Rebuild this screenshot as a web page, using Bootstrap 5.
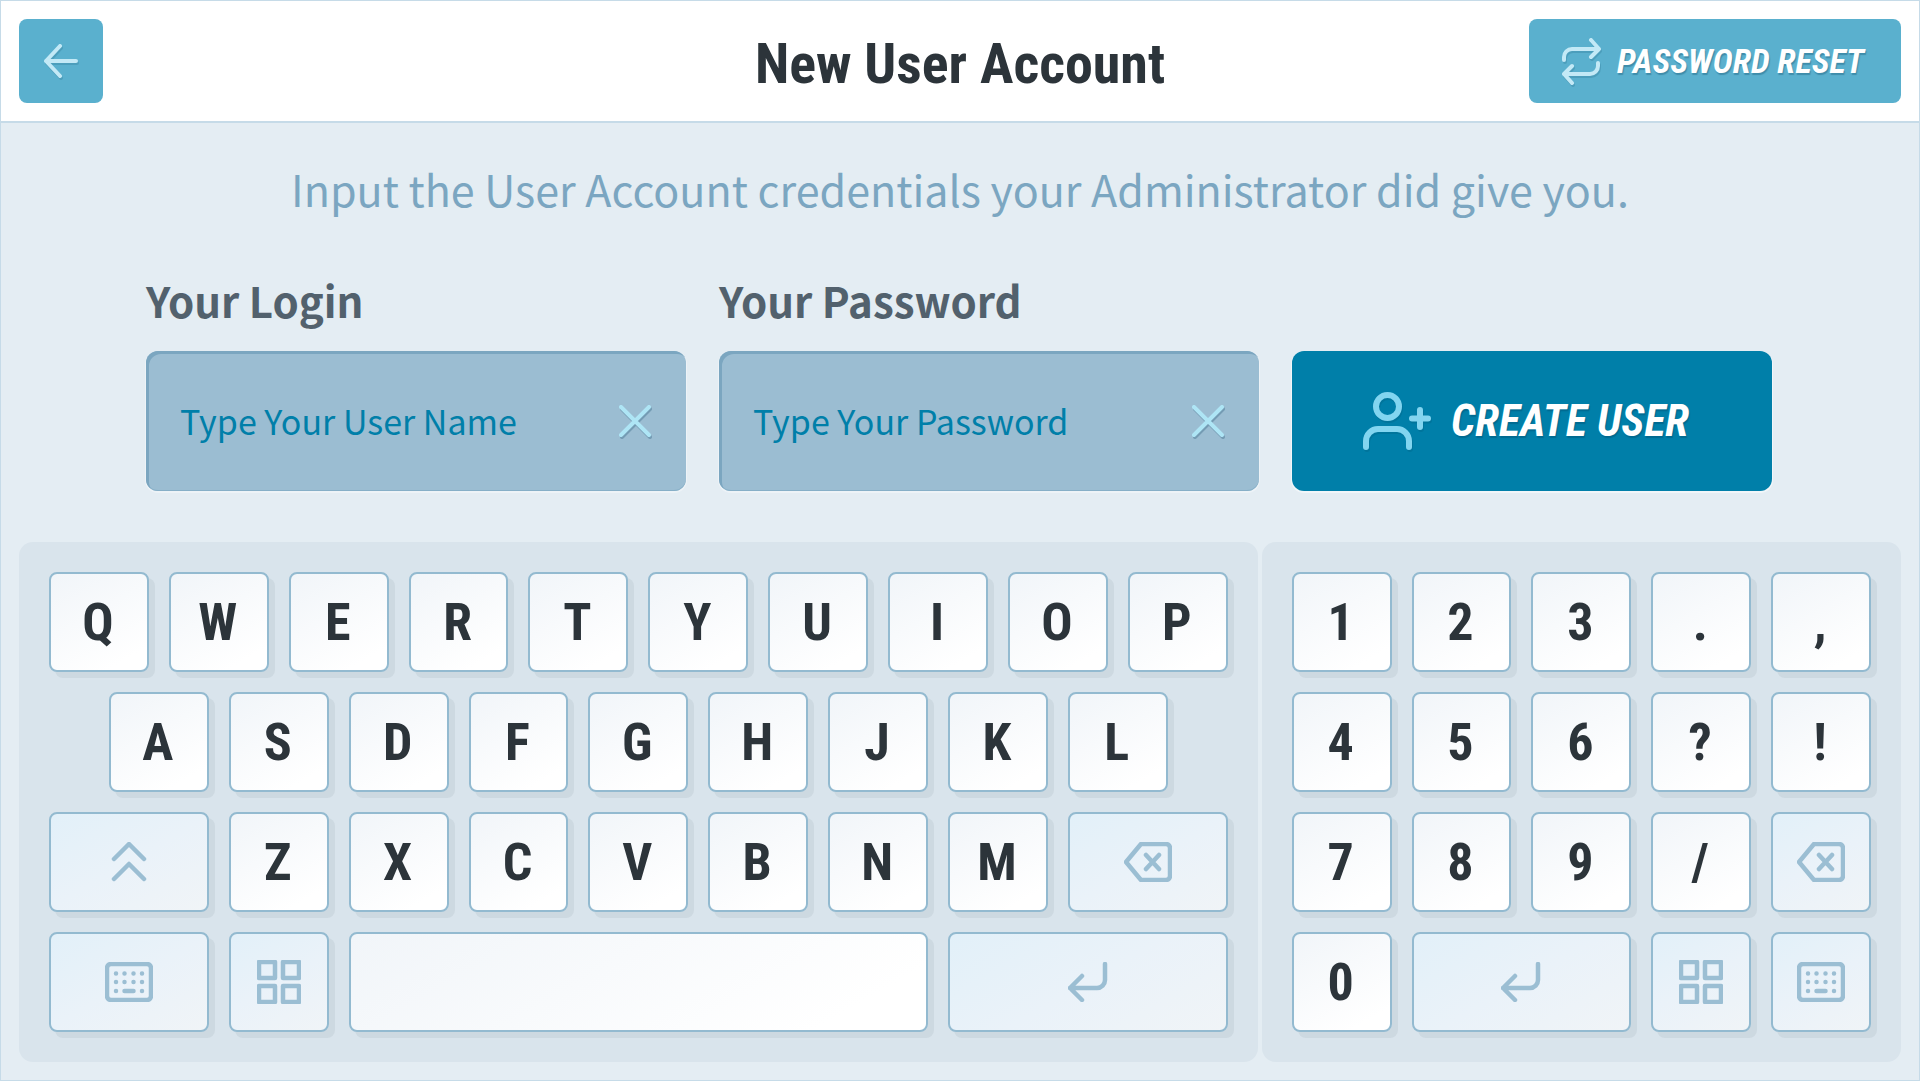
<!DOCTYPE html>
<html lang="en">
<head>
<meta charset="utf-8">
<meta name="viewport" content="width=device-width, initial-scale=1">
<title>New User Account</title>
<link href="https://cdn.jsdelivr.net/npm/bootstrap@5.3.0/dist/css/bootstrap.min.css" rel="stylesheet">
<style>
  :root { --line: #c6dbe8; --edge: #93bad0; --icon: #9bbed3; --ink: #2c343a; }
  body { background: #e4edf3; color: var(--ink); font-family: "Noto Sans CJK JP", "Noto Sans", sans-serif; }
  .kiosk { border: 1px solid var(--line); min-height: 100vh; }
  svg { fill: none; stroke: currentColor; stroke-width: 4; stroke-linecap: round; stroke-linejoin: round; flex: none; }
  .topbar { background: #fff; border-bottom: 2px solid var(--line); padding: 18px; }
  .side { flex: 1 1 0; }
  .heading, .btn-face, .keycap { font-family: "Roboto Condensed", "Liberation Sans Narrow", Roboto, sans-serif; font-weight: 700; }
  .heading { font-size: 56px; line-height: 76px; padding-top: 6px; }
  .btn-face { font-style: italic; color: #fff; border: 0; text-shadow: 1px 2px 1px rgba(0, 60, 90, .3); }
  .btn-face svg { filter: drop-shadow(1px 2px 0 rgba(0, 60, 90, .15)); }
  .btn-soft { background: #5ab0ce; border-radius: 8px; height: 84px; font-size: 34px; }
  .btn-soft:hover { background: #4ca5c5; color: #fff; }
  .btn-soft svg { color: #c3e9f6; }
  .btn-back { width: 84px; }
  .btn-reset { padding: 0 37px 0 32px; gap: 16px; }
  .btn-create { background: #007fa9; border-radius: 12px; height: 140px; font-size: 44px; gap: 20px; padding: 0 20px 0 8px; box-shadow: 0 1px 0 1px #f1f6f9; }
  .btn-create:hover { background: #00709a; color: #fff; }
  .btn-create svg { color: #82d5f0; stroke-width: 6; }
  .intro { color: #7ba6c1; font-size: 43px; line-height: 60px; padding-top: 35px; }
  .signup { max-width: 1628px; gap: 33px; padding: 52px 2px 51px 0; }
  .entry { flex: 540 1 0; }
  .action { flex: 480 1 0; }
  .entry label { color: #52616d; font-size: 42px; font-weight: 600; line-height: 60px; margin-bottom: 21px; }
  .field { background: #9bbdd2; border-radius: 12px; height: 140px; padding: 0 34px; box-shadow: inset 3px 3px 0 #7ba6c0, inset 0 -1px 0 #86afc7, 0 1px 0 1px #edf3f7; }
  .field .form-control, .field .form-control:focus { background: transparent; border: 0; box-shadow: none; color: #007fa9; font-size: 34px; line-height: 48px; }
  .field .form-control::placeholder { color: #007fa9; opacity: 1; }
  .btn-clear { color: #aee5f5; line-height: 0; }
  .btn-clear svg { filter: drop-shadow(1px 2px 0 rgba(0, 60, 90, .25)); }
  .boards { padding: 0 18px 18px; gap: 4px; }
  .board { background: #d9e4ec; border-radius: 14px; padding: 30px; display: grid; gap: 20px; grid-auto-rows: 100px; }
  .letters { flex: 59 1 0; grid-template-columns: repeat(20, minmax(0, 1fr)); }
  .digits { flex: 29 1 0; grid-template-columns: repeat(5, minmax(0, 1fr)); }
  .letters .keycap { grid-column-end: span 2; }
  .letters .w3 { grid-column-end: span 3; }
  .letters .w5 { grid-column-end: span 5; }
  .letters .w10 { grid-column-end: span 10; }
  .letters .indent { grid-column-start: 2; }
  .letters .first { grid-column-start: 1; }
  .digits .w2 { grid-column-end: span 2; }
  .keycap { border: 2px solid var(--edge); border-radius: 8px; background: linear-gradient(150deg, #f1f5f9, #fff 85%); box-shadow: 6px 6px 0 #cdd9e1; color: var(--ink); font-size: 52px; line-height: 60px; padding: 2px 2px 0 0; display: flex; align-items: center; justify-content: center; }
  .keycap:active { box-shadow: none; }
  .fn { background: linear-gradient(150deg, #e2f0f9, #eaf2f9 50%, #f0f4f7); color: var(--icon); padding: 0; }
  .fn svg { stroke-width: 4.5; }
</style>
</head>
<body>
<svg class="d-none" aria-hidden="true">
  <symbol id="i-keyboard" viewBox="0 0 48 40"><rect x="2" y="2" width="44" height="36" rx="4"/><path d="M11 11.500h.01M19.500 11.500h.01M28.500 11.500h.01M37 11.500h.01M11 20h.01M19.500 20h.01M28.500 20h.01M37 20h.01M11 29h.01M19.500 29h9M37 29h.01"/></symbol>
  <symbol id="i-grid" viewBox="0 0 44 44"><path d="M2 2h16v16H2zM26 2h16v16H26zM2 26h16v16H2zM26 26h16v16H26z"/></symbol>
  <symbol id="i-erase" viewBox="0 0 48 40"><path d="M17 2h25a4 4 0 0 1 4 4v28a4 4 0 0 1-4 4H17L2 20zM22 13l13 14M35 13L22 27"/></symbol>
  <symbol id="i-enter" viewBox="0 0 40 40"><path d="M37 2v16a8 8 0 0 1-8 8H2M14 14L2 26l12 12"/></symbol>
  <symbol id="i-clear" viewBox="0 0 34 34"><path d="M3 3l28 28M31 3L3 31"/></symbol>
</svg>

<div class="kiosk d-flex flex-column">
  <header class="topbar d-flex align-items-center">
    <div class="side d-flex">
      <button type="button" class="btn btn-face btn-soft btn-back d-flex align-items-center justify-content-center p-0" aria-label="Back">
        <svg width="36" height="36" viewBox="0 0 36 36"><path d="M33 18H3M17 3L3 18l14 15"/></svg>
      </button>
    </div>
    <h1 class="heading m-0 text-center">New User Account</h1>
    <div class="side d-flex justify-content-end">
      <button type="button" class="btn btn-face btn-soft btn-reset d-flex align-items-center">
        <svg width="40" height="48" viewBox="0 0 40 48"><path d="M3 23v-3a8 8 0 0 1 8-8h27M30 3l8 9-8 8M37 26v3a8 8 0 0 1-8 8H3M11 29l-8 8 8 9"/></svg>
        <span>PASSWORD RESET</span>
      </button>
    </div>
  </header>

  <main>
    <p class="intro text-center m-0">Input the User Account credentials your Administrator did give you.</p>

    <form class="signup d-flex align-items-end mx-auto" onsubmit="return false">
      <div class="entry">
        <label for="login" class="d-block">Your Login</label>
        <div class="field d-flex align-items-center">
          <input id="login" type="text" class="form-control p-0" placeholder="Type Your User Name">
          <button type="reset" class="btn btn-clear border-0 p-0" aria-label="Clear login"><svg width="34" height="34"><use href="#i-clear"/></svg></button>
        </div>
      </div>
      <div class="entry">
        <label for="password" class="d-block">Your Password</label>
        <div class="field d-flex align-items-center">
          <input id="password" type="password" class="form-control p-0" placeholder="Type Your Password">
          <button type="reset" class="btn btn-clear border-0 p-0" aria-label="Clear password"><svg width="34" height="34"><use href="#i-clear"/></svg></button>
        </div>
      </div>
      <div class="action">
        <button type="submit" class="btn btn-face btn-create w-100 d-flex align-items-center justify-content-center">
          <svg width="68" height="58" viewBox="0 0 68 58"><circle cx="24.500" cy="14.500" r="11.500"/><path d="M3 55V49a12 12 0 0 1 12-12h19a12 12 0 0 1 12 12v6M57 18v17M49 26.500h16"/></svg>
          <span>CREATE USER</span>
        </button>
      </div>
    </form>

    <div class="boards d-flex">
      <section class="board letters" aria-label="Letters">
        <button type="button" class="keycap">Q</button>
        <button type="button" class="keycap">W</button>
        <button type="button" class="keycap">E</button>
        <button type="button" class="keycap">R</button>
        <button type="button" class="keycap">T</button>
        <button type="button" class="keycap">Y</button>
        <button type="button" class="keycap">U</button>
        <button type="button" class="keycap">I</button>
        <button type="button" class="keycap">O</button>
        <button type="button" class="keycap">P</button>
        <button type="button" class="keycap indent">A</button>
        <button type="button" class="keycap">S</button>
        <button type="button" class="keycap">D</button>
        <button type="button" class="keycap">F</button>
        <button type="button" class="keycap">G</button>
        <button type="button" class="keycap">H</button>
        <button type="button" class="keycap">J</button>
        <button type="button" class="keycap">K</button>
        <button type="button" class="keycap">L</button>
        <button type="button" class="keycap fn w3 first" aria-label="Shift"><svg width="36" height="40" viewBox="0 0 36 40"><path d="M3 17L18 2l15 15M3 37l15-15 15 15"/></svg></button>
        <button type="button" class="keycap">Z</button>
        <button type="button" class="keycap">X</button>
        <button type="button" class="keycap">C</button>
        <button type="button" class="keycap">V</button>
        <button type="button" class="keycap">B</button>
        <button type="button" class="keycap">N</button>
        <button type="button" class="keycap">M</button>
        <button type="button" class="keycap fn w3" aria-label="Backspace"><svg width="48" height="40"><use href="#i-erase"/></svg></button>
        <button type="button" class="keycap fn w3" aria-label="Keyboard"><svg width="48" height="40"><use href="#i-keyboard"/></svg></button>
        <button type="button" class="keycap fn" aria-label="Symbols"><svg width="44" height="44"><use href="#i-grid"/></svg></button>
        <button type="button" class="keycap w10" aria-label="Space"></button>
        <button type="button" class="keycap fn w5" aria-label="Enter"><svg width="40" height="40"><use href="#i-enter"/></svg></button>
      </section>
      <section class="board digits" aria-label="Digits">
        <button type="button" class="keycap">1</button>
        <button type="button" class="keycap">2</button>
        <button type="button" class="keycap">3</button>
        <button type="button" class="keycap">.</button>
        <button type="button" class="keycap">,</button>
        <button type="button" class="keycap">4</button>
        <button type="button" class="keycap">5</button>
        <button type="button" class="keycap">6</button>
        <button type="button" class="keycap">?</button>
        <button type="button" class="keycap">!</button>
        <button type="button" class="keycap">7</button>
        <button type="button" class="keycap">8</button>
        <button type="button" class="keycap">9</button>
        <button type="button" class="keycap">/</button>
        <button type="button" class="keycap fn" aria-label="Backspace"><svg width="48" height="40"><use href="#i-erase"/></svg></button>
        <button type="button" class="keycap">0</button>
        <button type="button" class="keycap fn w2" aria-label="Enter"><svg width="40" height="40"><use href="#i-enter"/></svg></button>
        <button type="button" class="keycap fn" aria-label="Symbols"><svg width="44" height="44"><use href="#i-grid"/></svg></button>
        <button type="button" class="keycap fn" aria-label="Keyboard"><svg width="48" height="40"><use href="#i-keyboard"/></svg></button>
      </section>
    </div>
  </main>
</div>
<script src="https://cdn.jsdelivr.net/npm/bootstrap@5.3.0/dist/js/bootstrap.bundle.min.js"></script>
</body>
</html>
